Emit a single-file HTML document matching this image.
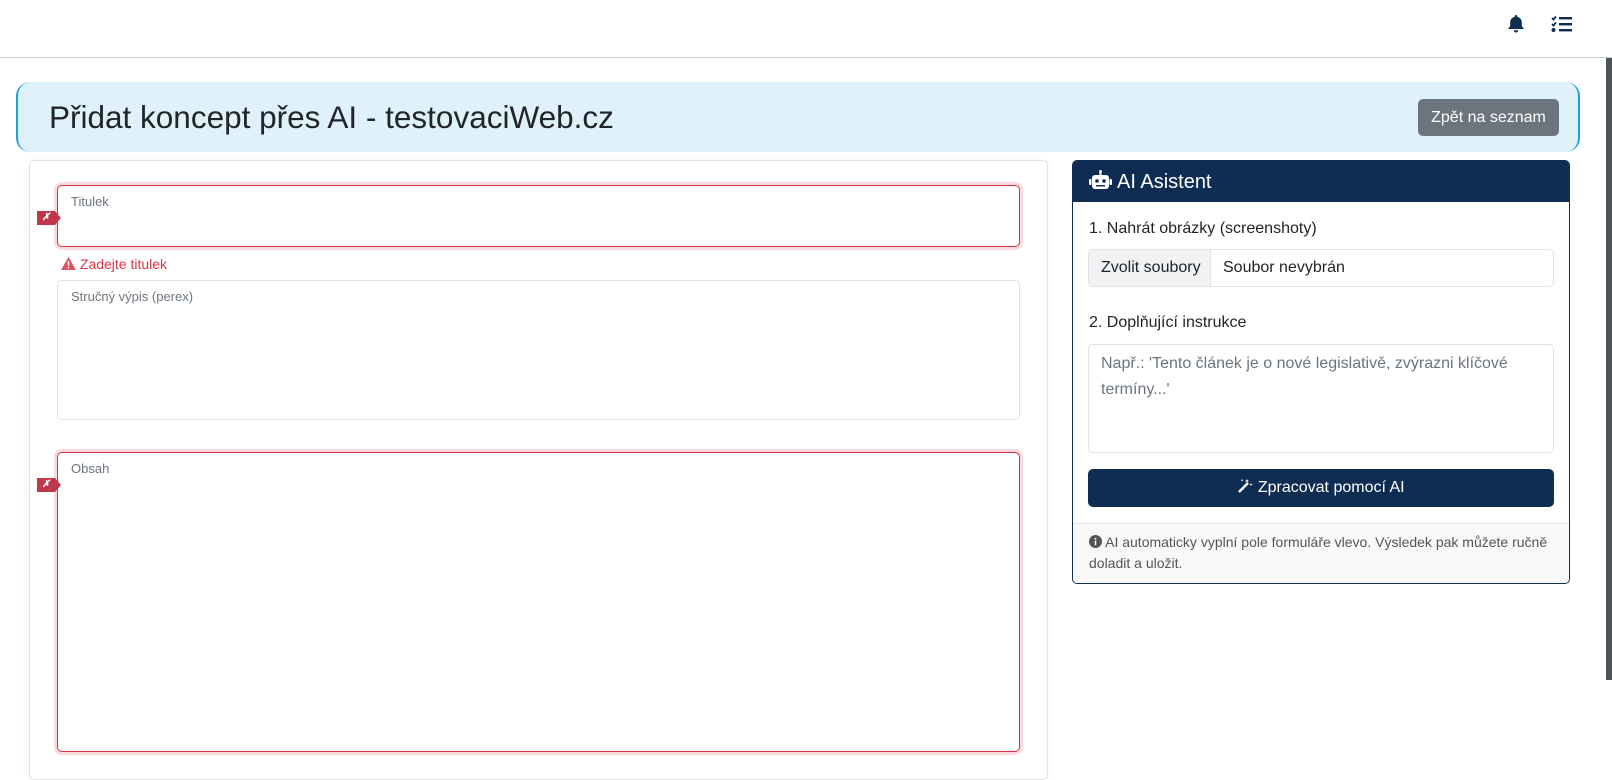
<!DOCTYPE html>
<html><head><meta charset="utf-8"><style>
*{box-sizing:border-box;margin:0;padding:0}
body{width:1612px;height:749px;overflow:hidden;background:#fff;font-family:"Liberation Sans",sans-serif;position:relative;color:#212529}
.abs{position:absolute}
.nav{left:0;top:0;width:1612px;height:58px;border-bottom:1px solid #ccc;background:#fff}
.scroll{left:1606px;top:58px;width:6px;height:622px;background:#4d5458}
.hdr{left:16px;top:82px;width:1564px;height:70px;background:#dff1fb;border:2px solid #1ea0dc;border-top:none;border-bottom:none;border-radius:14px}
.hdr h1{position:absolute;left:31px;top:17px;font-weight:400;font-size:31.5px;color:#212529}
.btn{left:1418px;top:99px;width:141px;height:37px;background:#6c757d;color:#fff;border-radius:5px;font-size:16px;line-height:37px;text-align:center}
.card{left:29px;top:160px;width:1019px;height:620px;border:1px solid #e3e3e3;border-radius:5px;box-shadow:0 0 12px rgba(0,0,0,.04)}
.inp{border:1px solid #dee2e6;border-radius:5px;background:#fff}
.inp span{position:absolute;left:13px;top:8px;font-size:13px;color:#6c757d}
.err{border:1.5px solid #d03545;box-shadow:0 0 0 3px rgba(220,53,69,.18)}
.tag{width:18px;height:14px;background:#c0364a;color:#fff;font-size:10px;line-height:14px;text-align:center;font-weight:bold;font-style:italic}
.tag:after{content:"";position:absolute;right:-6px;top:0;border-left:6px solid #c0364a;border-top:7px solid transparent;border-bottom:7px solid transparent}
.ai{left:1072px;top:160px;width:498px;height:424px;border:1px solid #0f2d52;border-radius:5px;overflow:hidden;background:#fff}
.aih{left:0;top:0;width:100%;height:41px;background:#0f2d52;color:#fff;font-size:20px}
.lbl{font-size:16px;color:#212529}
</style></head><body>
<div class="abs nav">
<svg class="abs" style="left:1507px;top:14px" width="18" height="20" viewBox="0 0 18 20"><path d="M9 1c-.8 0-1.3.6-1.3 1.3v.6C4.9 3.5 3.2 5.8 3.2 8.5v3.5L1 15h16l-2.2-3V8.5c0-2.7-1.7-5-4.5-5.6v-.6C10.3 1.6 9.8 1 9 1zM6.8 16.3a2.2 2.2 0 0 0 4.4 0z" fill="#0f2d52"/></svg>
<svg class="abs" style="left:1551px;top:15px" width="21" height="18" viewBox="0 0 21 18"><path d="M1 3l1.5 1.5L5 1.5M1 9l1.5 1.5L5 7.5" stroke="#0f2d52" stroke-width="1.8" fill="none"/><rect x="0.5" y="13" width="4" height="4" rx="2" fill="#0f2d52"/><rect x="8" y="2" width="13" height="2.4" fill="#0f2d52"/><rect x="8" y="8" width="13" height="2.4" fill="#0f2d52"/><rect x="8" y="14" width="13" height="2.4" fill="#0f2d52"/></svg>
</div>
<div class="abs scroll"></div>
<div class="abs hdr"><h1>Přidat koncept přes AI - testovaciWeb.cz</h1></div>
<div class="abs btn">Zpět na seznam</div>
<div class="abs card"></div>
<div class="abs inp err" style="left:57px;top:185px;width:963px;height:62px"><span>Titulek</span></div>
<div class="abs tag" style="left:37px;top:211px">✗</div>
<div class="abs" style="left:61px;top:256px;font-size:14px;color:#dc3545">
<svg width="15" height="13" viewBox="0 0 16 14" style="vertical-align:-1px"><path d="M8 0L16 14H0z" fill="#e05060"/><rect x="7.2" y="4.5" width="1.6" height="5" fill="#fff"/><rect x="7.2" y="10.8" width="1.6" height="1.6" fill="#fff"/></svg> Zadejte titulek</div>
<div class="abs inp" style="left:57px;top:280px;width:963px;height:140px"><span>Stručný výpis (perex)</span></div>
<div class="abs inp err" style="left:57px;top:452px;width:963px;height:300px"><span>Obsah</span></div>
<div class="abs tag" style="left:37px;top:478px">✗</div>
<div class="abs ai">
<div class="abs aih"><svg class="abs" style="left:16px;top:9px" width="23" height="20" viewBox="0 0 23 20"><rect x="3" y="5" width="17" height="14" rx="3" fill="#fff"/><rect x="0" y="9" width="2.5" height="6" rx="1" fill="#fff"/><rect x="20.5" y="9" width="2.5" height="6" rx="1" fill="#fff"/><rect x="10.5" y="1" width="2" height="4" fill="#fff"/><circle cx="11.5" cy="1.5" r="1.5" fill="#fff"/><circle cx="8" cy="11" r="1.8" fill="#0f2d52"/><circle cx="15" cy="11" r="1.8" fill="#0f2d52"/><rect x="7" y="15" width="9" height="1.5" fill="#0f2d52"/></svg><span class="abs" style="left:44px;top:10px">AI Asistent</span></div>
<div class="abs lbl" style="left:16px;top:59px">1. Nahrát obrázky (screenshoty)</div>
<div class="abs inp" style="left:15px;top:88px;width:466px;height:38px;font-size:16px">
<div class="abs" style="left:0;top:0;width:122px;height:36px;background:#f0f2f4;border-right:1px solid #dee2e6;border-radius:5px 0 0 5px;line-height:36px;padding-left:12px">Zvolit soubory</div>
<div class="abs" style="left:134px;top:0;line-height:36px">Soubor nevybrán</div></div>
<div class="abs lbl" style="left:16px;top:153px">2. Doplňující instrukce</div>
<div class="abs inp" style="left:15px;top:183px;width:466px;height:109px;font-size:16px;color:#6c757d;line-height:26px;padding:6px 12px">Např.: 'Tento článek je o nové legislativě, zvýrazni klíčové termíny...'</div>
<div class="abs" style="left:15px;top:308px;width:466px;height:38px;background:#0f2d52;border-radius:5px;color:#fff;font-size:16px;line-height:38px;text-align:center"><svg width="16" height="16" viewBox="0 0 16 16" style="vertical-align:-2px"><path d="M2 14L11 5" stroke="#fff" stroke-width="2.5"/><path d="M10 1l.6 1.4L12 3l-1.4.6L10 5l-.6-1.4L8 3l1.4-.6zM14 5l.5 1 1 .5-1 .5-.5 1-.5-1-1-.5 1-.5zM5 1l.4.8.8.4-.8.4L5 3.4l-.4-.8-.8-.4.8-.4z" fill="#fff"/></svg> Zpracovat pomocí AI</div>
<div class="abs" style="left:0;top:362px;width:100%;height:62px;background:#f8f8f8;border-top:1px solid #dee2e6;font-size:14px;color:#555;line-height:21px;padding:8px 15px 0 16px">
<svg width="13" height="13" viewBox="0 0 14 14" style="vertical-align:-1px"><circle cx="7" cy="7" r="7" fill="#555"/><rect x="6.2" y="6" width="1.6" height="5" fill="#fff"/><circle cx="7" cy="4" r="1" fill="#fff"/></svg> AI automaticky vyplní pole formuláře vlevo. Výsledek pak můžete ručně doladit a uložit.</div>
</div>
</body></html>
